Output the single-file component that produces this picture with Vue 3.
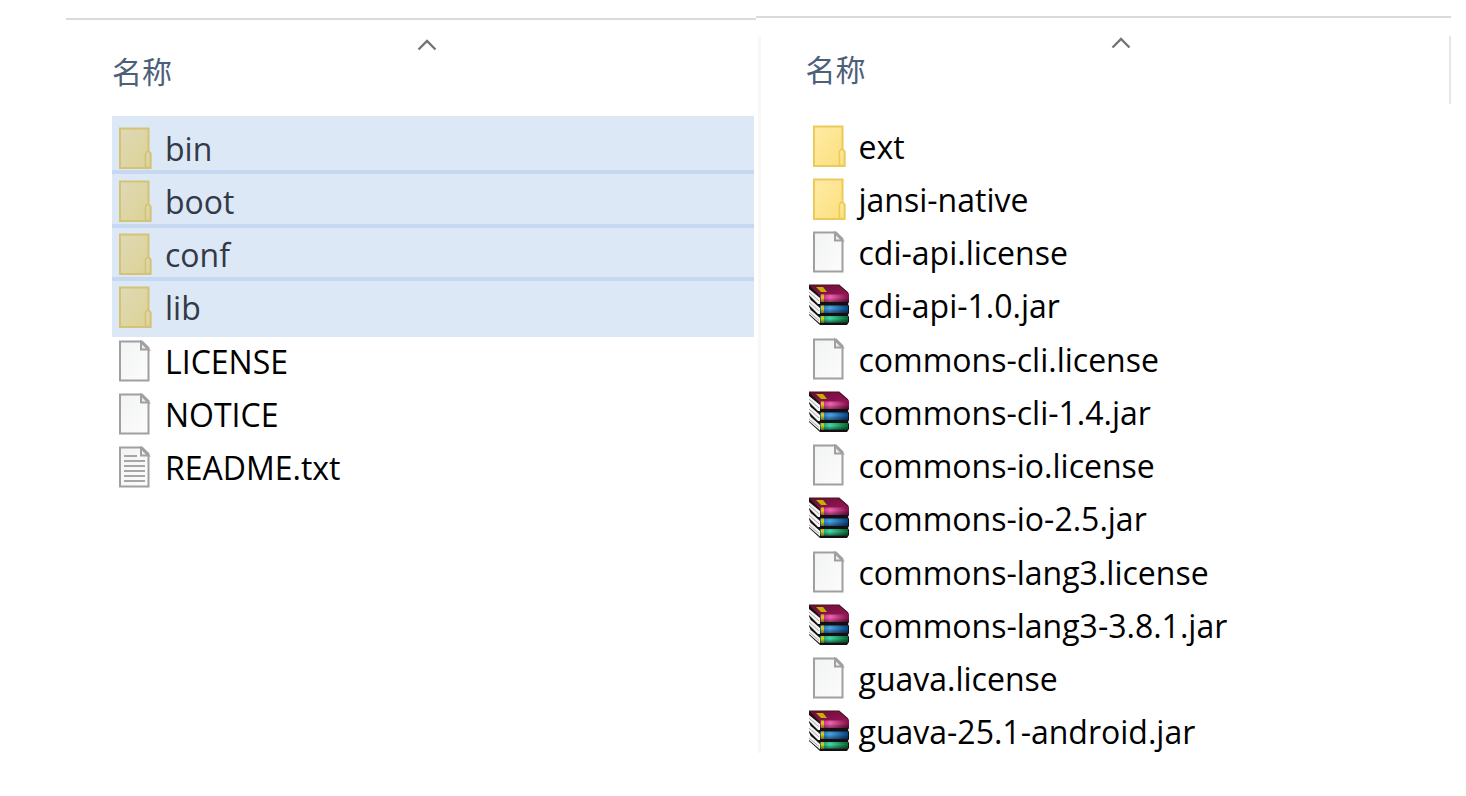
<script setup>
const panels = [
  {
    id: 'root',
    files: [
      { name: 'bin', icon: 'folder', selected: true },
      { name: 'boot', icon: 'folder', selected: true },
      { name: 'conf', icon: 'folder', selected: true },
      { name: 'lib', icon: 'folder', selected: true },
      { name: 'LICENSE', icon: 'page' },
      { name: 'NOTICE', icon: 'page' },
      { name: 'README.txt', icon: 'text' },
    ],
  },
  {
    id: 'lib',
    files: [
      { name: 'ext', icon: 'folder' },
      { name: 'jansi-native', icon: 'folder' },
      { name: 'cdi-api.license', icon: 'page' },
      { name: 'cdi-api-1.0.jar', icon: 'jar' },
      { name: 'commons-cli.license', icon: 'page' },
      { name: 'commons-cli-1.4.jar', icon: 'jar' },
      { name: 'commons-io.license', icon: 'page' },
      { name: 'commons-io-2.5.jar', icon: 'jar' },
      { name: 'commons-lang3.license', icon: 'page' },
      { name: 'commons-lang3-3.8.1.jar', icon: 'jar' },
      { name: 'guava.license', icon: 'page' },
      { name: 'guava-25.1-android.jar', icon: 'jar' },
    ],
  },
]
</script>

<template>
  <svg class="defs" width="0" height="0" aria-hidden="true">
    <defs>
      <linearGradient id="g-folder" x1="0" y1="0" x2="1" y2="1">
        <stop offset="0" stop-color="#ffeba6" /><stop offset="1" stop-color="#fbdf7c" />
      </linearGradient>
      <linearGradient id="g-folder-selected" x1="0" y1="0" x2="1" y2="1">
        <stop offset="0" stop-color="#dfd9b6" /><stop offset="1" stop-color="#dcd293" />
      </linearGradient>
      <linearGradient id="g-page" x1="0" y1="0" x2="1" y2="1">
        <stop offset="0" stop-color="#f2f3f4" /><stop offset="1" stop-color="#fcfcfc" />
      </linearGradient>
      <linearGradient id="g-cover" x1="0" y1="0" x2="1" y2="1">
        <stop offset="0" stop-color="#641030" /><stop offset="1" stop-color="#9c145c" />
      </linearGradient>
      <linearGradient id="g-red" x1="0" y1="0" x2="1" y2="0">
        <stop offset="0" stop-color="#c01874" /><stop offset=".35" stop-color="#f464b4" /><stop offset="1" stop-color="#840c48" />
      </linearGradient>
      <linearGradient id="g-blue" x1="0" y1="0" x2="1" y2="0">
        <stop offset="0" stop-color="#146cb4" /><stop offset=".35" stop-color="#48a4e4" /><stop offset="1" stop-color="#084484" />
      </linearGradient>
      <linearGradient id="g-green" x1="0" y1="0" x2="1" y2="0">
        <stop offset="0" stop-color="#0c9458" /><stop offset=".35" stop-color="#40dca4" /><stop offset="1" stop-color="#086c34" />
      </linearGradient>
      <linearGradient id="g-shade" x1="0" y1="0" x2="0" y2="1">
        <stop offset="0" stop-color="#000" stop-opacity=".1" /><stop offset=".4" stop-color="#000" stop-opacity="0" /><stop offset="1" stop-color="#000" stop-opacity=".45" />
      </linearGradient>
    </defs>
  </svg>
  <main class="explorer">
    <section v-for="panel in panels" :key="panel.id" class="panel" :class="panel.id">
      <header class="head">
        <button type="button" class="sort">
          <svg class="chevron" viewBox="0 0 20 13" aria-hidden="true">
            <path d="M1.500 11.500 10 3l8.500 8.500" fill="none" stroke="#747474" stroke-width="2.400" />
          </svg>
          <span>名称</span>
        </button>
      </header>
      <ul class="files">
        <li v-for="file in panel.files" :key="file.name" class="file" :class="{ selected: file.selected }">
          <svg class="icon" viewBox="0 0 42 42" aria-hidden="true">
            <g v-if="file.icon === 'folder'" class="folder">
              <path d="M6 1.500H34.500V24.500L36.500 26.500V41H6Z" stroke-width="2" />
              <path d="M31.500 40.500V26.500L33 24.500H35L36.500 26.500V40.500Z" stroke-width="1.600" />
            </g>
            <g v-else-if="file.icon === 'jar'">
              <path d="M1 1H31L41 10V18L40 20 41 22V29L40 31 41 33V38L39 41H12L1 31V28L3 27 1 22V18L3 17 1 12Z" fill="#160e12" />
              <path d="M1 5 12 14V20H10L1 11Z" fill="#f4f4f4" />
              <path d="M1 15 4 17 12 24V30H10L1 21Z" fill="#f4f4f4" />
              <path d="M1 25 4 27 12 34V39.500L1 30Z" fill="#f4f4f4" />
              <path d="M1 8 11 17M1 18 11 27M1 28 11 36.500" stroke="#a8a8a8" stroke-width="1" />
              <path d="M1 1H31L41 10V12H12Z" fill="url(#g-cover)" />
              <path d="M1 1H31L40 9" fill="none" stroke="#4c1426" stroke-width="1.200" />
              <path d="M8 3H15L19 8H13Z" fill="#c4b000" />
              <path d="M12 10.500H40L41 12V18H12Z" fill="url(#g-red)" />
              <path d="M12 21.500H40V29H12Z" fill="url(#g-blue)" />
              <path d="M12 32H40V38.500H12Z" fill="url(#g-green)" />
              <path d="M13 10.500H16V18H13ZM13 21.500H16V29H13ZM13 32H16V38.500H13Z" fill="#dcc81c" />
              <path d="M12 10.500H40L41 12V18H12Z" fill="url(#g-shade)" />
              <path d="M12 21.500H40V29H12Z" fill="url(#g-shade)" />
              <path d="M12 32H40V38.500H12Z" fill="url(#g-shade)" />
            </g>
            <g v-else>
              <path d="M6 1.500H28L34.500 8V40.500H6Z" fill="url(#g-page)" stroke="#a0a0a0" stroke-width="2" />
              <path d="M27 2V9.500H34.500Z" fill="#eee" stroke="#a0a0a0" stroke-width="2" />
              <path v-if="file.icon === 'text'" d="M10 10H23M10 15H31M10 20H31M10 25H31M10 30H31M10 35H31" stroke="#a6a6a6" stroke-width="2" />
            </g>
          </svg>
          <span class="name">{{ file.name }}</span>
        </li>
      </ul>
    </section>
  </main>
</template>

<style scoped>
.defs {
  position: absolute;
}
.explorer {
  display: flex;
  align-items: flex-start;
  padding: 16px 15px 0 66px;
  font-family: "Open Sans", "Noto Sans CJK SC", sans-serif;
  color: #000;
}
.panel {
  position: relative;
  box-sizing: border-box;
  min-width: 0;
  border-top: 2px solid #dadada;
}
.root {
  flex: 641;
  margin-top: 2px;
  padding: 18px 2px 0 46px;
}
.lib {
  flex: 645;
  padding: 18px 0 0 50px;
}
.lib::before {
  content: "";
  position: absolute;
  top: 18px;
  bottom: 5px;
  left: 2px;
  width: 3px;
  background: #f8f8f8;
}
.head {
  height: 68px;
  padding-right: 11px;
}
.lib .head {
  padding-right: 13px;
  border-right: 2px solid #e6e6e6;
}
.sort {
  display: flex;
  flex-direction: column;
  width: 100%;
  padding: 0;
  border: 0;
  background: none;
  font-family: "Noto Sans CJK SC", sans-serif;
  font-size: 30px;
  line-height: 38px;
  color: #4c607a;
  text-align: left;
}
.chevron {
  align-self: center;
  width: 20px;
  height: 13px;
}
.files {
  display: grid;
  grid-auto-rows: 1fr;
  margin: 0;
  padding: 0;
  list-style: none;
}
.root .files {
  min-height: 373px;
  margin-top: 15px;
}
.lib .files {
  min-height: 639px;
  margin-top: 15px;
}
.file {
  position: relative;
  display: flex;
  align-items: center;
  gap: 9px;
  padding-left: 2px;
}
.icon {
  flex: none;
  width: 42px;
  height: 42px;
}
.folder path {
  fill: url(#g-folder);
  stroke: #ebca5a;
}
.selected .folder path {
  fill: url(#g-folder-selected);
  stroke: #d3c377;
}
.name {
  padding-top: 2px;
  font-size: 32px;
  line-height: 40px;
  white-space: nowrap;
}
.selected {
  background: #dce8f6;
  color: #333946;
}
.selected:first-child {
  box-shadow: 0 -5px 0 #dce8f6;
}
.selected:nth-child(4) {
  box-shadow: 0 3px 0 #dce8f6;
}
.selected:not(:nth-child(4))::after {
  content: "";
  position: absolute;
  right: 0;
  bottom: 0;
  left: 0;
  height: 4px;
  background: #c6d7f0;
}
</style>

<style>
body {
  background: #fff;
}
</style>
